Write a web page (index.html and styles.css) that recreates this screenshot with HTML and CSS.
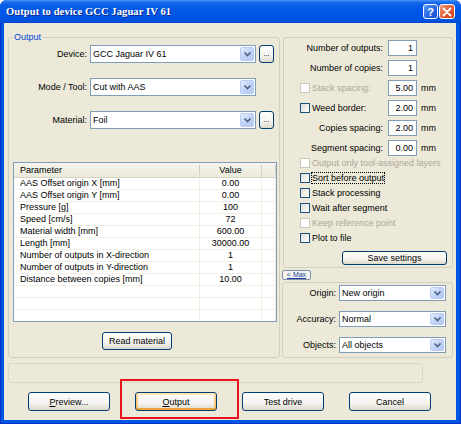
FILE: index.html
```html
<!DOCTYPE html>
<html>
    <head>
        <title>Output to device GCC Jaguar IV 61</title>
        <link rel="stylesheet" href="styles.css">
    </head>
    <body>
        <div class="window">
            <div class="titlebar">
                <span class="title">Output to device GCC Jaguar IV 61</span>
                <span class="capBtn help">?</span>
                <span class="capBtn close">
                    <svg width="10" height="10" viewBox="0 0 10 10"><path d="M1.5 1.5 L8.5 8.5 M8.5 1.5 L1.5 8.5" stroke="#fff" stroke-width="1.8" stroke-linecap="round"/></svg>
                </span>
            </div>
            <div class="client">
                <div class="main">
                    <fieldset class="outputGroup">
                        <legend>Output</legend>
                        <div class="fieldRow">
                            <span class="fieldLabel">Device:</span>
                            <div class="combo wide"><span class="comboValue">GCC Jaguar IV 61</span><span class="arrow"><svg width="9" height="6" viewBox="0 0 9 6"><path d="M1.5 1.5 L4.5 4.5 L7.5 1.5" fill="none" stroke="#4D6185" stroke-width="1.6"/></svg></span></div>
                            <button class="btn dots">...</button>
                        </div>
                        <div class="fieldRow">
                            <span class="fieldLabel">Mode / Tool:</span>
                            <div class="combo wide"><span class="comboValue">Cut with AAS</span><span class="arrow"><svg width="9" height="6" viewBox="0 0 9 6"><path d="M1.5 1.5 L4.5 4.5 L7.5 1.5" fill="none" stroke="#4D6185" stroke-width="1.6"/></svg></span></div>
                        </div>
                        <div class="fieldRow">
                            <span class="fieldLabel">Material:</span>
                            <div class="combo wide"><span class="comboValue">Foil</span><span class="arrow"><svg width="9" height="6" viewBox="0 0 9 6"><path d="M1.5 1.5 L4.5 4.5 L7.5 1.5" fill="none" stroke="#4D6185" stroke-width="1.6"/></svg></span></div>
                            <button class="btn dots">...</button>
                        </div>
                        <div class="list">
                            <div class="listHead">
                                <span class="cell">Parameter</span>
                                <span class="cell center">Value</span>
                                <span class="cell"></span>
                            </div>
                            <div class="listRow"><span class="cell">AAS Offset origin X [mm]</span><span class="cell center">0.00</span><span class="cell"></span></div>
                            <div class="listRow"><span class="cell">AAS Offset origin Y [mm]</span><span class="cell center">0.00</span><span class="cell"></span></div>
                            <div class="listRow"><span class="cell">Pressure [g]</span><span class="cell center">100</span><span class="cell"></span></div>
                            <div class="listRow"><span class="cell">Speed [cm/s]</span><span class="cell center">72</span><span class="cell"></span></div>
                            <div class="listRow"><span class="cell">Material width [mm]</span><span class="cell center">600.00</span><span class="cell"></span></div>
                            <div class="listRow"><span class="cell">Length [mm]</span><span class="cell center">30000.00</span><span class="cell"></span></div>
                            <div class="listRow"><span class="cell">Number of outputs in X-direction</span><span class="cell center">1</span><span class="cell"></span></div>
                            <div class="listRow"><span class="cell">Number of outputs in Y-direction</span><span class="cell center">1</span><span class="cell"></span></div>
                            <div class="listRow"><span class="cell">Distance between copies [mm]</span><span class="cell center">10.00</span><span class="cell"></span></div>
                            <div class="listRow"><span class="cell"></span><span class="cell"></span><span class="cell"></span></div>
                            <div class="listRow"><span class="cell"></span><span class="cell"></span><span class="cell"></span></div>
                            <div class="listRow"><span class="cell"></span><span class="cell"></span><span class="cell"></span></div>
                        </div>
                        <button class="btn readBtn">Read material</button>
                    </fieldset>
                    <div class="rightCol">
                        <div class="group settingsGroup">
                            <div class="numRow">
                                <span class="numLabel">Number of outputs:</span>
                                <span class="num">1</span>
                            </div>
                            <div class="numRow">
                                <span class="numLabel">Number of copies:</span>
                                <span class="num">1</span>
                            </div>
                            <div class="numRow">
                                <span class="numLabel checkLabel disabled"><span class="check off"></span>Stack spacing:</span>
                                <span class="num">5.00</span>
                                <span class="unit">mm</span>
                            </div>
                            <div class="numRow">
                                <span class="numLabel checkLabel"><span class="check"></span>Weed border:</span>
                                <span class="num">2.00</span>
                                <span class="unit">mm</span>
                            </div>
                            <div class="numRow">
                                <span class="numLabel">Copies spacing:</span>
                                <span class="num">2.00</span>
                                <span class="unit">mm</span>
                            </div>
                            <div class="numRow">
                                <span class="numLabel">Segment spacing:</span>
                                <span class="num">0.00</span>
                                <span class="unit">mm</span>
                            </div>
                            <div class="checkList">
                                <div class="checkRow disabled"><span class="check off"></span><span class="checkText">Output only tool-assigned layers</span></div>
                                <div class="checkRow"><span class="check"></span><span class="checkText focused">Sort before output</span></div>
                                <div class="checkRow"><span class="check"></span><span class="checkText">Stack processing</span></div>
                                <div class="checkRow"><span class="check"></span><span class="checkText">Wait after segment</span></div>
                                <div class="checkRow disabled"><span class="check off"></span><span class="checkText">Keep reference point</span></div>
                                <div class="checkRow"><span class="check"></span><span class="checkText">Plot to file</span></div>
                            </div>
                            <button class="btn saveBtn">Save settings</button>
                        </div>
                        <button class="maxBtn">&lt; Max</button>
                        <div class="group miscGroup">
                            <div class="comboRow">
                                <span class="comboLabel">Origin:</span>
                                <div class="combo small"><span class="comboValue">New origin</span><span class="arrow"><svg width="9" height="6" viewBox="0 0 9 6"><path d="M1.5 1.5 L4.5 4.5 L7.5 1.5" fill="none" stroke="#4D6185" stroke-width="1.6"/></svg></span></div>
                            </div>
                            <div class="comboRow">
                                <span class="comboLabel">Accuracy:</span>
                                <div class="combo small"><span class="comboValue">Normal</span><span class="arrow"><svg width="9" height="6" viewBox="0 0 9 6"><path d="M1.5 1.5 L4.5 4.5 L7.5 1.5" fill="none" stroke="#4D6185" stroke-width="1.6"/></svg></span></div>
                            </div>
                            <div class="comboRow">
                                <span class="comboLabel">Objects:</span>
                                <div class="combo small"><span class="comboValue">All objects</span><span class="arrow"><svg width="9" height="6" viewBox="0 0 9 6"><path d="M1.5 1.5 L4.5 4.5 L7.5 1.5" fill="none" stroke="#4D6185" stroke-width="1.6"/></svg></span></div>
                            </div>
                        </div>
                    </div>
                </div>
                <div class="status"></div>
                <div class="actions">
                    <button class="btn actionBtn"><u>P</u>review...</button>
                    <span class="highlight"><button class="btn actionBtn default"><u>O</u>utput</button></span>
                    <button class="btn actionBtn">Test drive</button>
                    <button class="btn actionBtn">Cancel</button>
                </div>
            </div>
        </div>
    </body>
</html>
```
FILE: styles.css
```css
*{
    box-sizing: border-box;
}
body{
    margin: 0;
    background: #fff;
    font-family: "Liberation Sans", Arial, sans-serif;
    font-size: 9px;
    color: #000;
}
.window{
    width: 461px;
    height: 424px;
    display: flex;
    flex-direction: column;
    background: #0055E5;
    border-radius: 7px 7px 0 0;
    overflow: hidden;
    box-shadow: inset 1px 0 #0831C8, inset -1px 0 #0831C8, inset 0 -1px #0831C8;
}
.titlebar{
    height: 23px;
    display: flex;
    align-items: center;
    padding: 0 6px 0 6px;
    background: linear-gradient(to bottom, #4A96F6 0, #1C6EEF 2px, #0A5EE8 5px, #0056E6 50%, #0054E2 85%, #0048D0 100%);
}
.title{
    flex: 1;
    color: #fff;
    font-family: "Liberation Serif", "Times New Roman", serif;
    font-weight: bold;
    font-size: 10.5px;
    letter-spacing: 0.1px;
    text-shadow: 1px 1px 0 #0C2A8E;
}
.capBtn{
    width: 15px;
    height: 15px;
    border: 1px solid #fff;
    border-radius: 3px;
    display: flex;
    align-items: center;
    justify-content: center;
    color: #fff;
    font-weight: bold;
    font-size: 11px;
}
.help{
    background: linear-gradient(135deg, #5B9BF7, #2463E0 60%, #1B4FC8);
}
.close{
    width: 16px;
    margin-left: 1px;
    background: linear-gradient(135deg, #F09A7C, #E2592F 55%, #C8401A);
}
.client{
    flex: 1;
    margin: 0 5px 4px 4px;
    background: #ECE9D8;
}
.main{
    display: flex;
    align-items: flex-start;
    padding: 9px 0 0 4px;
}
.outputGroup{
    margin: 0;
    padding: 0 0 0 4px;
    width: 272px;
    height: 326px;
    border: 1px solid #D0D0BF;
    border-radius: 3px;
}
legend{
    color: #0046D5;
    padding: 0 1px;
    margin-left: 0;
    line-height: 10px;
}
.fieldRow{
    display: flex;
    align-items: center;
    height: 18px;
    margin-top: 3px;
    margin-bottom: 15px;
    margin-left: -4px;
}
.fieldLabel{
    width: 78px;
    text-align: right;
    margin-right: 3px;
}
.combo{
    display: flex;
    align-items: center;
    height: 18px;
    border: 1px solid #7F9DB9;
    background: #fff;
    padding-left: 2px;
}
.comboValue{
    flex: 1;
}
.combo.wide{
    width: 166px;
}
.combo.small{
    width: 107px;
    height: 16px;
}
.arrow{
    width: 14px;
    height: calc(100% - 2px);
    margin-right: 1px;
    border: 1px solid #BACCF2;
    border-radius: 2px;
    background: linear-gradient(135deg, #E5EDFD, #C2D4F8 50%, #B2C7F5);
    display: flex;
    align-items: center;
    justify-content: center;
}
.btn{
    font-family: inherit;
    font-size: 9px;
    color: #000;
    padding: 0;
    border: 1px solid #003C74;
    border-radius: 3px;
    background: linear-gradient(to bottom, #FFFFFF, #F4F3EE 60%, #DDD8CB);
}
.dots{
    width: 15px;
    height: 18px;
    margin-left: 3px;
    font-size: 8px;
    line-height: 8px;
}
.list{
    width: 264px;
    height: 160px;
    margin-top: 33px;
    border: 1px solid #7F9DB9;
    background: #fff;
    overflow: hidden;
}
.listHead, .listRow{
    display: grid;
    grid-template-columns: 186px 62px 1fr;
}
.listHead{
    height: 15px;
    background: linear-gradient(to bottom, #F5F4EE, #EBEADB);
    border-bottom: 1px solid #D6D2C2;
}
.listHead .cell{
    border-right: 1px solid #D1CEBC;
    margin: 2px 0 2px 0;
    line-height: 10px;
}
.listRow{
    height: 12px;
    border-bottom: 1px solid #F1EFE4;
}
.listRow .cell{
    line-height: 11px;
    border-right: 1px solid #F1EFE4;
}
.cell{
    padding-left: 6px;
    white-space: nowrap;
}
.cell.center{
    text-align: center;
    padding-left: 0;
}
.readBtn{
    display: block;
    width: 70px;
    height: 18px;
    margin: 10px 0 0 89px;
}
.rightCol{
    width: 171px;
    margin: 5px 0 0 2px;
}
.group{
    border: 1px solid #D0D0BF;
    border-radius: 3px;
}
.settingsGroup{
    height: 231px;
    margin-left: 1px;
    padding-top: 2px;
}
.numRow{
    display: flex;
    align-items: center;
    height: 16px;
    margin-bottom: 4px;
}
.numLabel{
    width: 99px;
    margin-right: 5px;
    text-align: right;
}
.checkLabel{
    display: flex;
    align-items: center;
    padding-left: 16px;
    text-align: left;
}
.checkLabel .check{
    margin-right: 2px;
}
.disabled{
    color: #ACA899;
}
.num{
    width: 29px;
    height: 16px;
    border: 1px solid #7F9DB9;
    background: #fff;
    text-align: right;
    padding-right: 3px;
    line-height: 14px;
}
.unit{
    margin-left: 4px;
}
.check{
    width: 10px;
    height: 10px;
    border: 1px solid #1C5180;
    background: linear-gradient(135deg, #DCDCD7, #FFFFFF);
    flex: none;
}
.check.off{
    border-color: #CAC8BB;
    background: #fff;
}
.checkList{
    margin-top: -5px;
}
.checkRow{
    display: flex;
    align-items: center;
    height: 15px;
    padding-left: 16px;
}
.checkText{
    margin-left: 2px;
}
.checkText.focused{
    outline: 1px dotted #000;
    outline-offset: 0;
}
.saveBtn{
    display: block;
    width: 105px;
    height: 14px;
    margin: 6px 0 0 58px;
    line-height: 10px;
}
.maxBtn{
    display: block;
    width: 29px;
    height: 10px;
    margin: 2px 0 2px 0;
    padding: 0;
    font-family: inherit;
    font-size: 7px;
    line-height: 8px;
    color: #1A3C9E;
    text-decoration: underline;
    background: #F4F3EE;
    border: 1px solid #7F8FA8;
    border-radius: 2px;
}
.miscGroup{
    height: 76px;
    padding-top: 2px;
}
.comboRow{
    display: flex;
    align-items: center;
    height: 16px;
    margin-bottom: 10px;
}
.comboLabel{
    width: 53px;
    margin-right: 3px;
    text-align: right;
}
.status{
    width: 415px;
    height: 20px;
    margin: 5px 0 0 4px;
    border: 1px solid #D8D6C6;
    border-radius: 3px;
}
.actions{
    display: flex;
    align-items: flex-start;
    margin-top: 9px;
    padding-left: 24px;
}
.actionBtn{
    width: 82px;
    height: 19px;
    margin-right: 25px;
}
.highlight{
    position: relative;
    display: flex;
}
.highlight::after{
    content: "";
    position: absolute;
    left: -15px;
    top: -13px;
    width: 115px;
    height: 36px;
    border: 2px solid #E8131B;
}
.default{
    box-shadow: inset 0 2px #FEE7B5, inset 0 -2px #ECA43A, inset 2px 0 #F8CB7C, inset -2px 0 #F8CB7C;
}
```
